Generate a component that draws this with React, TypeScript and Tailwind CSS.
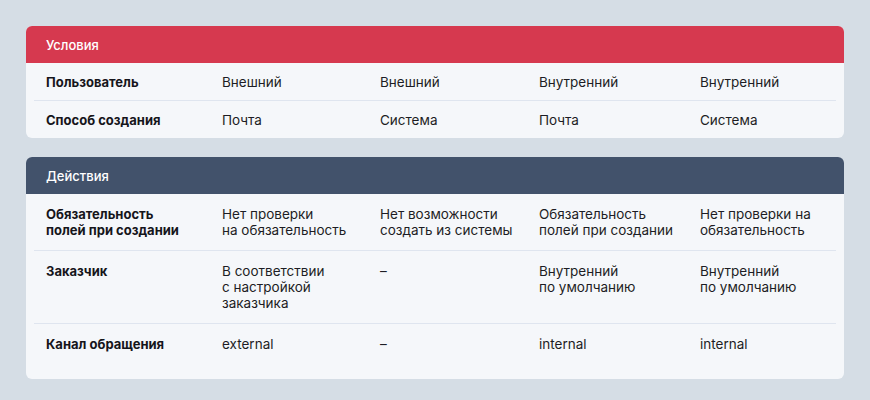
import React from "react";

type Row = { label: React.ReactNode; cells: React.ReactNode[] };

const conditions: Row[] = [
  { label: "Пользователь", cells: ["Внешний", "Внешний", "Внутренний", "Внутренний"] },
  { label: "Способ создания", cells: ["Почта", "Система", "Почта", "Система"] },
];

const actions: Row[] = [
  {
    label: (
      <>
        Обязательность
        <br />
        полей при создании
      </>
    ),
    cells: [
      <>
        Нет проверки
        <br />
        на обязательность
      </>,
      <>
        Нет возможности
        <br />
        создать из системы
      </>,
      <>
        Обязательность
        <br />
        полей при создании
      </>,
      <>
        Нет проверки на
        <br />
        обязательность
      </>,
    ],
  },
  {
    label: "Заказчик",
    cells: [
      <>
        В соответствии
        <br />с настройкой
        <br />
        заказчика
      </>,
      "–",
      <>
        Внутренний
        <br />
        по умолчанию
      </>,
      <>
        Внутренний
        <br />
        по умолчанию
      </>,
    ],
  },
  { label: "Канал обращения", cells: ["external", "–", "internal", "internal"] },
];

function Card({
  title,
  headerClass,
  rows,
  rowPad,
  bodyClass,
}: {
  title: string;
  headerClass: string;
  rows: Row[];
  rowPad: string;
  bodyClass: string;
}) {
  return (
    <div className="rounded-[6px] bg-[#f5f7fa] overflow-hidden">
      <div className={`h-[37px] flex items-center pl-5 text-white text-[13px] font-medium ${headerClass}`}>
        {title}
      </div>
      <div className={`mx-2 ${bodyClass}`}>
        {rows.map((r, i) => (
          <div
            key={i}
            className={`grid grid-cols-[176px_158px_159px_161px_1fr] px-3 ${rowPad} ${
              i < rows.length - 1 ? "border-b border-[#dfe5ef]" : ""
            }`}
          >
            <div className="font-bold text-[13px] text-[#15151b]">{r.label}</div>
            {r.cells.map((c, j) => (
              <div key={j} className="text-[13.5px] text-[#1d1d24]">
                {c}
              </div>
            ))}
          </div>
        ))}
      </div>
    </div>
  );
}

export default function App() {
  return (
    <div className="w-[870px] h-[400px] bg-[#d5dde5] px-[26px] pt-[26px] flex flex-col gap-[19px] text-[13px] leading-[16px] font-[Inter,'Noto_Sans',sans-serif]">
      <Card
        title="Условия"
        headerClass="bg-[#d6394f]"
        rows={conditions}
        rowPad="py-[10.5px]"
        bodyClass=""
      />
      <Card
        title="Действия"
        headerClass="bg-[#42526b]"
        rows={actions}
        rowPad="py-3"
        bodyClass="pb-[15px]"
      />
    </div>
  );
}
